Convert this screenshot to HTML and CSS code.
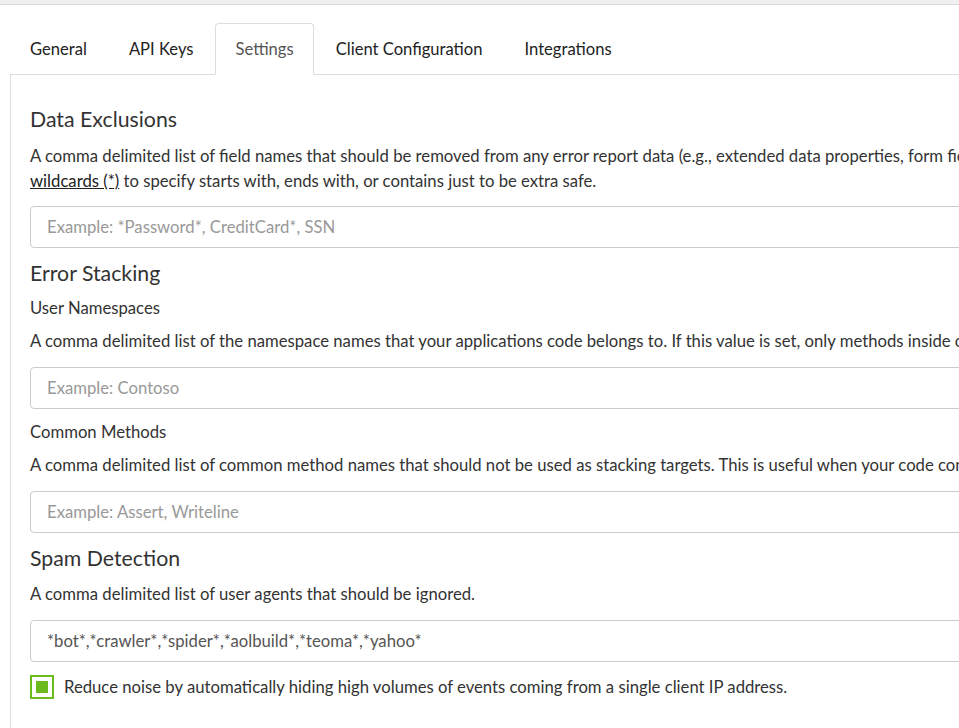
FILE: index.html
```html
<!DOCTYPE html>
<html>
<head>
<meta charset="utf-8">
<title>Settings</title>
<link rel="stylesheet" href="styles.css">
</head>
<body>
<div class="topbar"></div>
<div class="page">
  <ul class="tabs">
    <li class="tab"><a>General</a></li>
    <li class="tab"><a>API Keys</a></li>
    <li class="tab active"><a>Settings</a></li>
    <li class="tab"><a>Client Configuration</a></li>
    <li class="tab"><a>Integrations</a></li>
  </ul>
  <div class="panel">
    <h3 class="section-title first">Data Exclusions</h3>
    <p class="help help-tight">A comma delimited list of field names that should be removed from any error report data (e.g., extended data properties, form fields, cookies and query parameters). You can also use<br><a class="link">wildcards (*)</a> to specify starts with, ends with, or contains just to be extra safe.</p>
    <input class="field field-before-section" type="text" placeholder="Example: *Password*, CreditCard*, SSN">

    <h3 class="section-title">Error Stacking</h3>
    <div class="label">User Namespaces</div>
    <p class="help">A comma delimited list of the namespace names that your applications code belongs to. If this value is set, only methods inside of these namespaces will be considered as stacking targets.</p>
    <input class="field field-before-label" type="text" placeholder="Example: Contoso">
    <div class="label">Common Methods</div>
    <p class="help">A comma delimited list of common method names that should not be used as stacking targets. This is useful when your code contains shared utility methods that throw lots of errors.</p>
    <input class="field field-before-section" type="text" placeholder="Example: Assert, Writeline">

    <h3 class="section-title">Spam Detection</h3>
    <p class="help">A comma delimited list of user agents that should be ignored.</p>
    <input class="field" type="text" value="*bot*,*crawler*,*spider*,*aolbuild*,*teoma*,*yahoo*">
    <label class="check">
      <span class="box"><span class="box-fill"></span></span>
      <span class="check-text">Reduce noise by automatically hiding high volumes of events coming from a single client IP address.</span>
    </label>
  </div>
</div>
</body>
</html>
```

FILE: styles.css
```css
html, body {
  margin: 0;
  padding: 0;
  overflow: hidden;
  background: #fff;
}
body {
  font-family: "Lato", "Liberation Sans", sans-serif;
  font-size: 16.7px;
  color: #333;
  width: 959px;
  height: 728px;
}
.topbar {
  height: 4px;
  background: #efefef;
  border-bottom: 1px solid #dcdcdc;
}
.page {
  width: 1500px;
  padding: 18px 0 0 10px;
}
.tabs {
  list-style: none;
  margin: 0;
  padding: 0;
  display: flex;
  border-bottom: 1px solid #ddd;
}
.tab {
  margin: 0 2px -1px 0;
}
.tab a {
  display: block;
  padding: 0 19px;
  line-height: 50px;
  font-size: 16.6px;
  border: 1px solid transparent;
  border-radius: 4px 4px 0 0;
  color: #222;
}
.tab.active a {
  color: #555;
  border-color: #ddd;
  border-bottom-color: #fff;
  background: #fff;
}
.panel {
  border-left: 1px solid #ddd;
  padding: 31px 20px 40px 19px;
}
.section-title {
  margin: 0 0 10px;
  font-size: 21.3px;
  line-height: 26px;
  font-weight: 400;
  color: #333;
}
.section-title.first {
  margin-bottom: 11px;
}
.label {
  line-height: 24px;
  margin: 0 0 8px;
  color: #333;
}
.help {
  margin: 0 0 13px;
  padding-top: 1px;
  line-height: 25px;
  white-space: nowrap;
}
.help.help-tight {
  margin-bottom: 12px;
}
.link {
  color: #222;
  text-decoration: underline;
}
.field {
  display: block;
  box-sizing: border-box;
  width: 1400px;
  height: 42px;
  margin: 0 0 11px;
  padding: 0 16px;
  border: 1px solid #ccc;
  border-radius: 4px;
  font-family: inherit;
  font-size: 16.7px;
  color: #555;
  background: #fff;
  outline: none;
}
.field.field-before-label {
  margin-bottom: 11px;
}
.field.field-before-section {
  margin-bottom: 12px;
}
.field::placeholder {
  color: #999;
}
.check {
  display: flex;
  align-items: center;
  gap: 10px;
  margin-top: 13px;
}
.box {
  box-sizing: border-box;
  width: 24px;
  height: 24px;
  border: 2px solid #6cbb1e;
  display: flex;
  align-items: center;
  justify-content: center;
}
.box-fill {
  width: 12px;
  height: 12px;
  background: #6cbb1e;
}
.check-text {
  color: #333;
}
```
